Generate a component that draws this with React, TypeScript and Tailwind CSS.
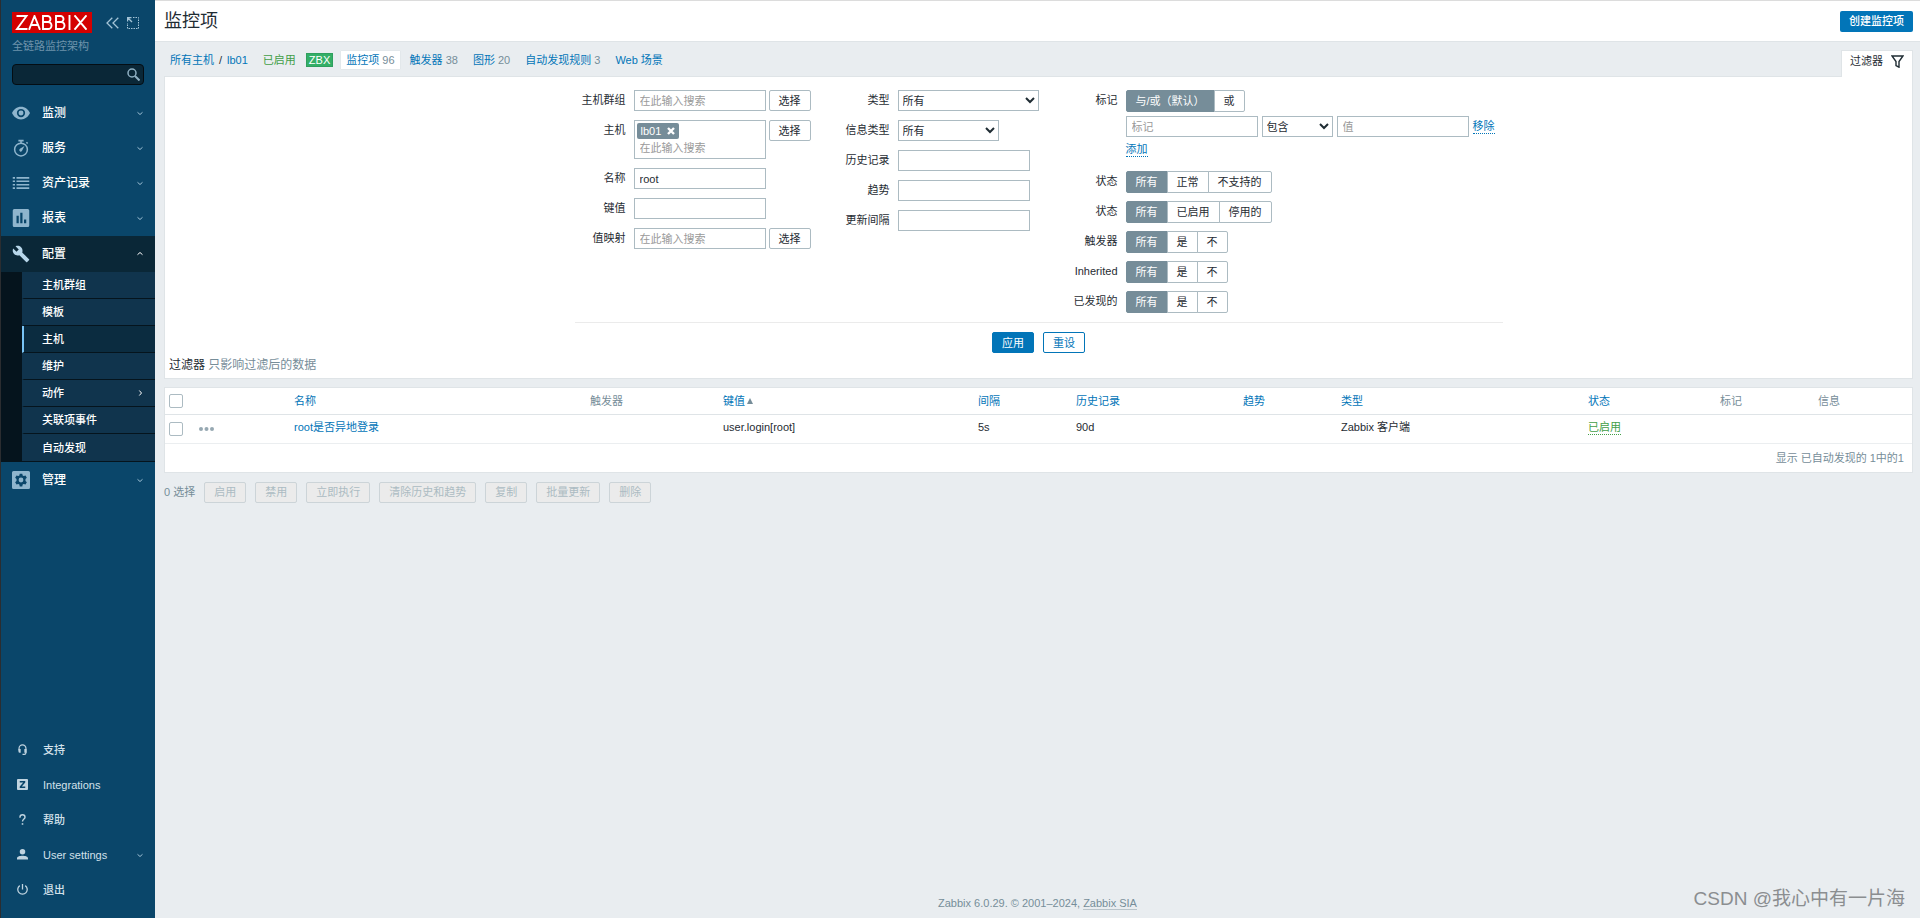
import { type ReactNode, useState } from 'react';

const NAV_TOP = [
  { label: '监测', icon: 'eye' },
  { label: '服务', icon: 'timer' },
  { label: '资产记录', icon: 'list' },
  { label: '报表', icon: 'chart' },
];

const SUBMENU = [
  { label: '主机群组' },
  { label: '模板' },
  { label: '主机', active: true },
  { label: '维护' },
  { label: '动作', arrow: true },
  { label: '关联项事件' },
  { label: '自动发现' },
];

const NAV_BOTTOM = [
  { label: '支持', icon: 'support' },
  { label: 'Integrations', icon: 'integrations' },
  { label: '帮助', icon: 'help' },
  { label: 'User settings', icon: 'user', expandable: true },
  { label: '退出', icon: 'power' },
];

const HOST_TABS = [
  { label: '监控项', count: 96, active: true },
  { label: '触发器', count: 38 },
  { label: '图形', count: 20 },
  { label: '自动发现规则', count: 3 },
  { label: 'Web 场景' },
];

const BULK_ACTIONS = ['启用', '禁用', '立即执行', '清除历史和趋势', '复制', '批量更新', '删除'];

const icons: Record<string, ReactNode> = {
  eye: (
    <path fillRule="evenodd" d="M12 3.500C6.500 3.500 2.200 7 0 12c2.200 5 6.500 8.500 12 8.500s9.800-3.500 12-8.500c-2.200-5-6.500-8.500-12-8.500zm0 14a5.500 5.500 0 1 1 0-11 5.500 5.500 0 0 1 0 11zm0-2.200a3.300 3.300 0 1 0 0-6.600 3.300 3.300 0 0 0 0 6.600z" />
  ),
  timer: (
    <>
      <circle cx="12" cy="14" r="8.500" fill="none" stroke="currentColor" strokeWidth="2" />
      <path d="M8.500 1h7v2.300h-7zM11 3h2v3h-2zM18.500 5l1.500-1.400 1.600 1.600-1.500 1.500zM16.600 9.200l-3 6.200a2 2 0 1 1-3-2.400z" />
    </>
  ),
  list: (
    <path d="M1 4h3v2.200H1zM6 4h17v2.200H6zM1 8.600h3v2.200H1zM6 8.600h17v2.200H6zM1 13.200h3v2.200H1zM6 13.200h17v2.200H6zM1 17.800h3V20H1zM6 17.800h17V20H6z" />
  ),
  chart: (
    <path fillRule="evenodd" d="M3 0h18a2 2 0 0 1 2 2v20a2 2 0 0 1-2 2H3a2 2 0 0 1-2-2V2a2 2 0 0 1 2-2zm3 9v10h3V9zm5-4v14h3V5zm5 9v5h3v-5z" />
  ),
  wrench: (
    <path d="M22.700 19l-9.100-9.100c.9-2.300.4-5-1.500-6.900-2-2-5-2.400-7.400-1.300L9 6 6 9 1.600 4.700C.4 7.100.9 10.100 2.900 12.100c1.900 1.900 4.600 2.400 6.900 1.500l9.100 9.100c.4.400 1 .4 1.400 0l2.300-2.300c.5-.4.5-1.100.1-1.400z" />
  ),
  gear: (
    <path fillRule="evenodd" d="M2 0h20a2 2 0 0 1 2 2v20a2 2 0 0 1-2 2H2a2 2 0 0 1-2-2V2a2 2 0 0 1 2-2zm8.300 3.500l-.5 2.400-1.500.9L6 6l-1.800 3 1.800 1.700v2.600L4.200 15 6 18l2.300-.8 1.500.9.5 2.400h3.400l.5-2.400 1.500-.9 2.300.8 1.800-3-1.800-1.700v-2.600L19.800 9 18 6l-2.300.8-1.500-.9-.5-2.400zM12 15.200a3.200 3.200 0 1 1 0-6.400 3.200 3.200 0 0 1 0 6.400z" />
  ),
  support: (
    <>
      <path d="M4.500 14V9.500a7.500 7.500 0 0 1 15 0V19a3.500 3.500 0 0 1-3.500 3.500H12" fill="none" stroke="currentColor" strokeWidth="2.600" />
      <path d="M3.200 11H8v8H6a2.800 2.800 0 0 1-2.800-2.800zM16 11h4.800v8H16z" />
    </>
  ),
  integrations: (
    <path fillRule="evenodd" d="M2 0h20a2 2 0 0 1 2 2v20a2 2 0 0 1-2 2H2a2 2 0 0 1-2-2V2a2 2 0 0 1 2-2zm4 4.500v3h7.500L6 16.500v3h12v-3h-7.500L18 7.500v-3z" />
  ),
  help: (
    <>
      <path d="M6.500 8V7a5.500 5.500 0 0 1 11 0c0 4-5.500 4-5.500 9.500" fill="none" stroke="currentColor" strokeWidth="3" />
      <path d="M10.300 20h3.400v3.500h-3.400z" />
    </>
  ),
  user: (
    <path d="M12 0a6 6 0 1 1 0 12 6 6 0 0 1 0-12zM0 23v-3c0-4 7-5.500 12-5.500S24 16 24 20v3z" />
  ),
  power: (
    <path d="M12 0v12M6 3.500a10.300 10.300 0 1 0 12 0" fill="none" stroke="currentColor" strokeWidth="2.800" />
  ),
};

function Icon({ name, className }: { name: string; className: string }) {
  return (
    <svg viewBox="0 0 24 24" fill="currentColor" className={className} aria-hidden="true">
      {icons[name]}
    </svg>
  );
}

function Chevron({ className = '' }: { className?: string }) {
  return (
    <svg viewBox="0 0 8 8" className={`size-2 shrink-0 ${className}`} fill="none" stroke="currentColor" aria-hidden="true">
      <path d="M1.500 3.300L4 5.500 6.500 3.300" />
    </svg>
  );
}

function NavItem({ label, icon }: { label: string; icon: string }) {
  return (
    <a href="#" className="flex h-[35px] items-center pl-[11px] pr-[11px] text-xs font-medium text-white">
      <Icon name={icon} className="mr-3 size-[18px] text-[#8fb5cd]" />
      <span className="flex-1">{label}</span>
      <Chevron className="text-[#9ec0d4]" />
    </a>
  );
}

function Sidebar() {
  return (
    <aside className="flex w-[155px] shrink-0 flex-col border-l border-[#2b2d30] bg-[#0a466a] pb-[11px]">
      <div className="flex items-center pl-[11px] pt-3 text-[#a3c3d6]">
        <a href="#" aria-label="Zabbix" className="flex h-[21px] w-20 items-center justify-center bg-[#d40000]">
          <svg viewBox="0 0 72 15" className="h-[15px] w-[74px]" fill="none" stroke="#fff" strokeWidth="1.900" aria-hidden="true">
            <path d="M.5 1h10L1 14h10.500M13 14.800L18.500 1 24 14.800M15 10h7M27 1v13h5a3.500 3.500 0 0 0 0-7h-5 4.500a3 3 0 0 0 0-6zM40 1v13h5a3.500 3.500 0 0 0 0-7h-5 4.500a3 3 0 0 0 0-6zM53.500 0v15M58.500.3L70.500 14.700M70.500.3L58.500 14.700" />
          </svg>
        </a>
        <button type="button" aria-label="收起" className="ml-[14px]">
          <svg viewBox="0 0 13 12" className="h-3 w-[13px]" fill="none" stroke="currentColor" strokeWidth="1.300">
            <path d="M6.300.8L1 6l5.300 5.200M12.300.8L7 6l5.300 5.200" />
          </svg>
        </button>
        <button type="button" aria-label="隐藏" className="ml-2">
          <svg viewBox="0 0 12 12" className="size-3" fill="none" stroke="currentColor">
            <path d="M6 .5h5.500v11H.5V6" strokeDasharray="1.500 1" />
            <path d="M.5 4.500v-4h4M1 1l4 4" strokeWidth="1.400" />
          </svg>
        </button>
      </div>
      <div className="mt-1 pl-[11px] leading-[18px] text-[#6e93aa]">全链路监控架构</div>
      <form role="search" className="relative mx-[11px] mt-[9px]">
        <input type="text" aria-label="搜索" className="h-[21px] w-full rounded-sm border border-[#040d13] bg-[#0a2737] px-1 text-white outline-none" />
        <button type="button" aria-label="搜索" className="absolute right-1 top-1 text-[#8fb0c3]">
          <svg viewBox="0 0 13 13" className="size-[13px]" fill="none" stroke="currentColor">
            <circle cx="5" cy="5" r="4" strokeWidth="1.500" />
            <path d="M8 8l4.500 4.500" strokeWidth="2" />
          </svg>
        </button>
      </form>
      <nav className="mt-[10px]">
        {NAV_TOP.map((item) => (
          <NavItem key={item.label} {...item} />
        ))}
        <a href="#" className="mt-px flex h-9 items-center bg-[#0a2737] pl-[11px] pr-[11px] text-xs font-medium text-white">
          <Icon name="wrench" className="mr-3 size-[18px] text-[#b7d6ea]" />
          <span className="flex-1">配置</span>
          <Chevron className="rotate-180" />
        </a>
        <div className="bg-[#05141d] pb-px pl-[21px]">
          {SUBMENU.map((item) => (
            <a
              key={item.label}
              href="#"
              className={`flex h-[27px] items-center border-b border-b-[#05141d] border-l-2 pl-[18px] pr-[11px] font-medium text-white last:border-b-0 ${
                item.active ? 'border-l-[#79c4f5] bg-[#0b2c40]' : 'border-l-[#10344d] bg-[#10344d]'
              }`}
            >
              <span className="flex-1">{item.label}</span>
              {item.arrow && <Chevron className="-rotate-90" />}
            </a>
          ))}
        </div>
        <NavItem label="管理" icon="gear" />
      </nav>
      <nav className="mt-auto">
        {NAV_BOTTOM.map((item) => (
          <a key={item.label} href="#" className="flex h-[35px] items-center pl-4 pr-[11px] font-medium text-[#d3e1ea]">
            <Icon name={item.icon} className="mr-[15px] size-[11px] text-[#c0d4e0]" />
            <span className="flex-1">{item.label}</span>
            {item.expandable && <Chevron className="text-[#9ec0d4]" />}
          </a>
        ))}
      </nav>
    </aside>
  );
}

function Field({ label, htmlFor, children }: { label: string; htmlFor?: string; children: ReactNode }) {
  return (
    <div className="flex gap-2">
      <label htmlFor={htmlFor} className="w-[51px] shrink-0 whitespace-nowrap text-right leading-5">
        {label}
      </label>
      <div className="flex items-start gap-[3px]">{children}</div>
    </div>
  );
}

function TextInput({ id, label, placeholder, value }: { id: string; label?: string; placeholder?: string; value?: string }) {
  return (
    <input
      id={id}
      type="text"
      aria-label={label}
      defaultValue={value}
      placeholder={placeholder}
      className="h-[21px] w-[132px] border border-[#acbbc2] bg-white px-[5px] outline-none placeholder:text-[#9a9a9a]"
    />
  );
}

function Select({ id, label, options, className }: { id: string; label?: string; options: string[]; className: string }) {
  return (
    <select id={id} aria-label={label} className={`h-[21px] border border-[#acbbc2] bg-white ${className}`}>
      {options.map((option) => (
        <option key={option}>{option}</option>
      ))}
    </select>
  );
}

function SelectButton() {
  return (
    <button type="button" className="h-[21px] rounded-xs border border-[#acbbc2] bg-white px-[9px]">
      选择
    </button>
  );
}

function Segmented({ name, options }: { name: string; options: string[] }) {
  const [selected, setSelected] = useState(options[0]);

  return (
    <div className="flex">
      {options.map((option) => (
        <label key={option} className="group relative -ml-px first:ml-0">
          <input
            type="radio"
            name={name}
            checked={selected === option}
            onChange={() => setSelected(option)}
            className="peer sr-only"
          />
          <span className="block h-[22px] border border-[#acbbc2] bg-white px-[9px] leading-5 group-first:rounded-l-xs group-last:rounded-r-xs peer-checked:border-[#768d99] peer-checked:bg-[#768d99] peer-checked:text-white">
            {option}
          </span>
        </label>
      ))}
    </div>
  );
}

function FilterForm() {
  return (
    <form className="border border-[#dfe4e7] bg-white pb-[3px] pt-[13px]">
      <div className="mx-auto w-fit">
        <div className="flex gap-7 border-b border-[#ebebeb] pb-[9px] pr-2">
          <div className="flex flex-col gap-[9px]">
            <Field label="主机群组" htmlFor="groups">
              <TextInput id="groups" placeholder="在此输入搜索" />
              <SelectButton />
            </Field>
            <Field label="主机" htmlFor="hosts">
              <div className="h-[39px] w-[132px] border border-[#acbbc2] bg-white p-[2px]">
                <span className="flex h-4 w-fit items-center gap-[6px] rounded-xs bg-[#768d99] px-1 font-medium text-white">
                  lb01
                  <button type="button" aria-label="移除 lb01">
                    <svg viewBox="0 0 8 8" className="size-2" stroke="currentColor" strokeWidth="2.400">
                      <path d="M1 1l6 6M7 1L1 7" />
                    </svg>
                  </button>
                </span>
                <input id="hosts" type="text" placeholder="在此输入搜索" className="block h-[17px] w-full px-[3px] outline-none placeholder:text-[#9a9a9a]" />
              </div>
              <SelectButton />
            </Field>
            <Field label="名称" htmlFor="name">
              <TextInput id="name" value="root" />
            </Field>
            <Field label="键值" htmlFor="key">
              <TextInput id="key" />
            </Field>
            <Field label="值映射" htmlFor="valuemap">
              <TextInput id="valuemap" placeholder="在此输入搜索" />
              <SelectButton />
            </Field>
          </div>

          <div className="flex flex-col gap-[9px]">
            <Field label="类型" htmlFor="type">
              <Select id="type" options={['所有']} className="w-[141px]" />
            </Field>
            <Field label="信息类型" htmlFor="value-type">
              <Select id="value-type" options={['所有']} className="w-[101px]" />
            </Field>
            <Field label="历史记录" htmlFor="history">
              <TextInput id="history" />
            </Field>
            <Field label="趋势" htmlFor="trends">
              <TextInput id="trends" />
            </Field>
            <Field label="更新间隔" htmlFor="delay">
              <TextInput id="delay" />
            </Field>
          </div>

          <div className="flex flex-col gap-2">
            <Field label="标记">
              <div className="mb-1">
                <Segmented name="evaltype" options={['与/或（默认）', '或']} />
                <div className="mt-1 flex items-center gap-1">
                  <TextInput id="tag" label="标记" placeholder="标记" />
                  <Select id="operator" label="运算符" options={['包含', '等于']} className="w-[71px]" />
                  <TextInput id="tag-value" label="值" placeholder="值" />
                  <button type="button" className="border-b border-dotted border-[#0275b8] leading-[14px] text-[#0275b8]">移除</button>
                </div>
                <button type="button" className="mt-[5px] block border-b border-dotted border-[#0275b8] leading-[14px] text-[#0275b8]">添加</button>
              </div>
            </Field>
            <div className="mt-[2px] flex flex-col gap-2">
              <Field label="状态">
                <Segmented name="state" options={['所有', '正常', '不支持的']} />
              </Field>
              <Field label="状态">
                <Segmented name="status" options={['所有', '已启用', '停用的']} />
              </Field>
              <Field label="触发器">
                <Segmented name="triggers" options={['所有', '是', '不']} />
              </Field>
              <Field label="Inherited">
                <Segmented name="inherited" options={['所有', '是', '不']} />
              </Field>
              <Field label="已发现的">
                <Segmented name="discovered" options={['所有', '是', '不']} />
              </Field>
            </div>
          </div>
        </div>
        <div className="mt-[9px] flex justify-center gap-[9px]">
          <button type="button" className="h-[21px] rounded-xs border border-[#0275b8] bg-[#0275b8] px-[9px] text-white">应用</button>
          <button type="button" className="h-[21px] rounded-xs border border-[#0275b8] bg-white px-[9px] text-[#0275b8]">重设</button>
        </div>
      </div>
      <p className="mt-[2px] pl-1 text-xs leading-5 text-[#768d99]">
        <span className="text-[#1f2c33]">过滤器</span> 只影响过滤后的数据
      </p>
    </form>
  );
}

function ItemsTable() {
  return (
    <div className="mt-2 border border-[#dfe4e7] bg-white">
      <table className="w-full table-fixed text-left">
        <colgroup>
          <col className="w-[29px]" />
          <col className="w-[95px]" />
          <col className="w-[296px]" />
          <col className="w-[133px]" />
          <col className="w-[255px]" />
          <col className="w-[98px]" />
          <col className="w-[167px]" />
          <col className="w-[98px]" />
          <col className="w-[247px]" />
          <col className="w-[132px]" />
          <col className="w-[98px]" />
          <col className="w-[99px]" />
        </colgroup>
        <thead>
          <tr className="h-[26px] border-b border-[#dfe4e7] text-[#0275b8] [&>th]:px-[5px] [&>th]:font-normal">
            <th className="pl-1!">
              <input type="checkbox" aria-label="全选" className="block size-[14px] appearance-none rounded-xs border border-[#acbbc2] bg-white" />
            </th>
            <th />
            <th><a href="#">名称</a></th>
            <th className="text-[#768d99]">触发器</th>
            <th>
              <a href="#" className="flex items-center gap-[2px]">
                键值
                <svg viewBox="0 0 6 6" className="size-[6px] text-[#768d99]" fill="currentColor" aria-hidden="true">
                  <path d="M3 0l3 6H0z" />
                </svg>
              </a>
            </th>
            <th><a href="#">间隔</a></th>
            <th><a href="#">历史记录</a></th>
            <th><a href="#">趋势</a></th>
            <th><a href="#">类型</a></th>
            <th><a href="#">状态</a></th>
            <th className="text-[#768d99]">标记</th>
            <th className="text-[#768d99]">信息</th>
          </tr>
        </thead>
        <tbody>
          <tr className="h-[29px] border-b border-[#ebeef0] [&>td]:px-[5px] [&>td]:pb-1">
            <td className="pb-0! pl-1!">
              <input type="checkbox" aria-label="root是否异地登录" className="block size-[14px] appearance-none rounded-xs border border-[#acbbc2] bg-white" />
            </td>
            <td className="pb-0!">
              <button type="button" aria-label="更多" className="block text-[#96a8b2]">
                <svg viewBox="0 0 15 4" className="h-1 w-[15px]" fill="currentColor">
                  <circle cx="2" cy="2" r="2" />
                  <circle cx="7.500" cy="2" r="2" />
                  <circle cx="13" cy="2" r="2" />
                </svg>
              </button>
            </td>
            <td><a href="#" className="text-[#0275b8]">root是否异地登录</a></td>
            <td />
            <td>user.login[root]</td>
            <td>5s</td>
            <td>90d</td>
            <td />
            <td>Zabbix 客户端</td>
            <td><a href="#" className="inline-block border-b border-dotted border-[#429e47] leading-[13px] text-[#429e47]">已启用</a></td>
            <td />
            <td />
          </tr>
        </tbody>
      </table>
      <div className="pr-2 text-right leading-7 text-[#768d99]">显示 已自动发现的 1中的1</div>
    </div>
  );
}

function App() {
  return (
    <div className="flex min-h-screen bg-[#e9edf0] font-['Liberation_Sans','Noto_Sans_CJK_SC',sans-serif] text-[11px] leading-4 text-[#1f2c33]">
      <Sidebar />
      <div className="relative flex min-w-0 flex-1 flex-col">
        <header className="flex h-[42px] items-center justify-between border-b border-t border-b-[#dfe4e7] border-t-[#dcdcdc] bg-white pl-[9px] pr-[7px]">
          <h1 className="text-lg leading-6">监控项</h1>
          <button type="button" className="h-[21px] rounded-xs bg-[#0275b8] px-[9px] font-medium text-white">创建监控项</button>
        </header>

        <main className="pl-[9px] pr-[7px] pt-2">
          <div className="flex items-start justify-between">
            <nav className="flex items-center gap-[5px] pl-[6px] pt-px text-[#0275b8]">
              <a href="#">所有主机</a>
              <span className="text-[#1f2c33]">/</span>
              <a href="#" className="mr-[10px]">lb01</a>
              <span className="mr-[5px] text-[#429e47]">已启用</span>
              <span className="mr-[3px] border border-[#2f9f5e] bg-[#34af67] px-[2px] font-medium leading-3 text-white">ZBX</span>
              {HOST_TABS.map((tab) => (
                <a
                  key={tab.label}
                  href="#"
                  className={`whitespace-nowrap px-[5px] leading-[18px] ${tab.active ? 'bg-white shadow-[0_0_1px_#c8d0d5]' : ''}`}
                >
                  {tab.label}
                  {tab.count && <span className="text-[#768d99]"> {tab.count}</span>}
                </a>
              ))}
            </nav>
            <button type="button" className="relative -mb-px flex h-[27px] items-center gap-2 border border-b-0 border-[#dfe4e7] bg-white px-2 pb-[6px]">
              过滤器
              <svg viewBox="0 0 13 13" className="size-[13px]" fill="none" stroke="#1f2c33" strokeWidth="1.400" aria-hidden="true">
                <path d="M1 1h11L8 6.500v5.700L5 10.500v-4z" />
              </svg>
            </button>
          </div>
          <FilterForm />
          <ItemsTable />
          <div className="mt-[9px] flex items-center gap-[9px] text-[#768d99]">
            <span>0 选择</span>
            {BULK_ACTIONS.map((action) => (
              <button key={action} type="button" disabled className="h-[21px] rounded-xs border border-[#ccd4d8] bg-[#ebebeb] px-[9px] text-[#acbbc2]">
                {action}
              </button>
            ))}
          </div>
        </main>

        <footer className="mt-auto pb-[7px] text-center text-[#768d99]">
          Zabbix 6.0.29. © 2001–2024, <a href="#" className="border-b border-[#b9c4ca]">Zabbix SIA</a>
        </footer>
        <div className="absolute bottom-[7px] right-[15px] text-[19px] leading-6 text-[#8b8e90]">CSDN @我心中有一片海</div>
      </div>
    </div>
  );
}

export default App;
